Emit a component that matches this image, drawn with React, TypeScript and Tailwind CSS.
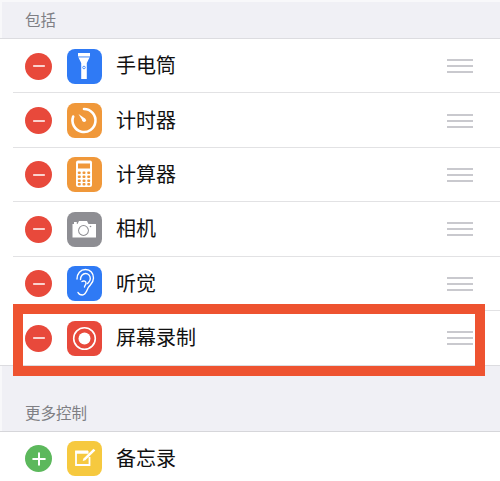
import React from 'react';
import { Minus, Plus } from 'lucide-react';

const FlashlightIcon = () => (
  <svg viewBox="0 0 35 35" className="h-full w-full">
    <path d="M11 4h12v3.500l-3.200 6.500v16h-5.600V14L11 7.500z" fill="#fff" />
    <rect x="11" y="7.500" width="12" height="0.900" fill="#2f7af5" />
    <circle cx="17" cy="18.500" r="1.300" fill="none" stroke="#2f7af5" strokeWidth="0.800" />
  </svg>
);

const TimerIcon = () => (
  <svg viewBox="0 0 35 35" className="h-full w-full">
    <path d="M17 6A11.500 11.500 0 1 1 6.200 13.500" fill="none" stroke="#fff" strokeWidth="2.600" strokeLinecap="round" />
    <path d="M11.500 11l6.800 4.700-2.300 2.800z" fill="#fff" />
    <circle cx="17.200" cy="17.200" r="1.800" fill="#fff" />
  </svg>
);

const CalculatorIcon = () => {
  const cells: React.ReactNode[] = [];
  [14.500, 18.500, 22.500, 26].forEach((y) => {
    [10.800, 15.500, 20.200].forEach((x) => {
      cells.push(<rect key={`${x}-${y}`} x={x} y={y} width="3" height="2.500" rx="1" fill="#f0983a" />);
    });
  });
  return (
    <svg viewBox="0 0 35 35" className="h-full w-full">
      <rect x="9" y="3.500" width="16" height="26.500" rx="2" fill="#fff" />
      <rect x="11" y="6.500" width="12" height="5" fill="#f0983a" />
      {cells}
    </svg>
  );
};

const CameraIcon = () => (
  <svg viewBox="0 0 35 35" className="h-full w-full">
    <path d="M5.500 12h5l1.500-3h8l1.500 3h7.500v13.500h-23.500z" fill="#fff" />
    <rect x="7" y="10" width="2.800" height="2" fill="#fff" />
    <circle cx="16.500" cy="18.500" r="5.400" fill="#8e8e93" />
    <circle cx="16.500" cy="18.500" r="4.400" fill="#fff" />
    <circle cx="23.500" cy="14.500" r="0.800" fill="#8e8e93" />
  </svg>
);

const EarIcon = () => (
  <svg viewBox="0 0 35 35" className="h-full w-full" fill="none" stroke="#fff" strokeLinecap="round" strokeLinejoin="round">
    <path d="M10 13c0-5.500 3.500-9.500 8.500-9.500s8 3.800 8 8.500c0 5-3.500 6.500-5.200 9.500-1.500 3-2.500 7.500-6 7.500-2 0-3.600-1-4.300-2.500" strokeWidth="1.400" />
    <path d="M13.500 13.500c0-3.300 2.200-6 5-6s4.800 2.400 4.800 5.200c0 2.400-1.600 3.400-2.800 4.800" strokeWidth="1.400" />
    <path d="M15 15.500c1.800-1.200 4.200-.2 4 2-.1 1.500-1.500 2-1.500 3.500" strokeWidth="1.400" />
  </svg>
);

const RecordIcon = () => (
  <svg viewBox="0 0 35 35" className="h-full w-full">
    <circle cx="17.500" cy="17.500" r="10.800" fill="none" stroke="#fff" strokeWidth="1.600" />
    <circle cx="17.500" cy="17.500" r="6" fill="#fff" />
  </svg>
);

const NotesIcon = () => (
  <svg viewBox="0 0 35 35" className="h-full w-full" fill="none">
    <path d="M21 10.500H9v13.500h13.500V16" stroke="#fff" strokeWidth="1.800" />
    <path d="M8.500 10h13v2.800h-13z" fill="#fff" />
    <path d="M16.500 17.500l10-9.800 1.800 1.800-10 9.800-2.600.8z" fill="#fff" />
  </svg>
);

const Handle = () => (
  <div className="ml-auto mr-[27px] flex w-[26px] flex-col gap-1">
    <div className="h-[2px] bg-[#c9c9ce]" />
    <div className="h-[2px] bg-[#c9c9ce]" />
    <div className="h-[2px] bg-[#c9c9ce]" />
  </div>
);

const rows = [
  { label: '手电筒', color: 'bg-[#2f7af5]', icon: <FlashlightIcon /> },
  { label: '计时器', color: 'bg-[#f0983a]', icon: <TimerIcon /> },
  { label: '计算器', color: 'bg-[#f0983a]', icon: <CalculatorIcon /> },
  { label: '相机', color: 'bg-[#8e8e93]', icon: <CameraIcon /> },
  { label: '听觉', color: 'bg-[#2f7af5]', icon: <EarIcon /> },
  { label: '屏幕录制', color: 'bg-[#e8493b]', icon: <RecordIcon /> },
];

const Row = ({ label, color, icon, last }: { label: string; color: string; icon: React.ReactNode; last: boolean }) => (
  <div className="relative flex h-[54.4px] items-center pl-[25px]">
    <div className="flex h-[27px] w-[27px] items-center justify-center rounded-full bg-[#e8493b]">
      <Minus size={18} color="#fff" strokeWidth={2.2} />
    </div>
    <div className={`ml-[15px] h-[35px] w-[35px] overflow-hidden rounded-lg ${color}`}>{icon}</div>
    <span className="ml-[14px] text-[20px] leading-none text-[#111]">{label}</span>
    <Handle />
    {!last && <div className="absolute bottom-0 left-[13px] right-0 h-[1px] bg-[#e2e2e4]" />}
  </div>
);

const App: React.FC = () => {
  return (
    <div
      className="relative h-[481px] w-[500px] overflow-hidden bg-[#f0f0f5]"
      style={{ fontFamily: '"Liberation Sans", "Noto Sans CJK SC", sans-serif' }}
    >
      <div className="flex h-[38px] items-center border-l-2 border-t-2 border-[#f8f8fa] pl-[23px] pt-[2px] text-[15.500px] text-[#7f7f84]">
        包括
      </div>
      <div className="border-y border-[#dcdce0] bg-white">
        {rows.map((r, i) => (
          <Row key={r.label} label={r.label} color={r.color} icon={r.icon} last={i === rows.length - 1} />
        ))}
      </div>
      <div className="flex h-[65px] items-end border-l-2 border-[#f8f8fa] pb-[10px] pl-[23px] text-[15.500px] leading-none text-[#7f7f84]">
        更多控制
      </div>
      <div className="h-[50px] border-t border-[#d6d6da] bg-white">
        <div className="flex h-[53px] items-center pl-[25px]">
          <div className="flex h-[27px] w-[27px] items-center justify-center rounded-full bg-[#5cb85c]">
            <Plus size={20} color="#fff" strokeWidth={2.4} />
          </div>
          <div className="ml-[15px] h-[35px] w-[35px] overflow-hidden rounded-lg bg-[#f6c93f]">
            <NotesIcon />
          </div>
          <span className="ml-[14px] text-[20px] leading-none text-[#111]">备忘录</span>
        </div>
      </div>
      {/* red highlight drawn over the screen recording row */}
      <div className="absolute left-[13px] top-[304px] h-[72px] w-[472px] border-[10px] border-[#ee5330]" />
    </div>
  );
};

export default App;
